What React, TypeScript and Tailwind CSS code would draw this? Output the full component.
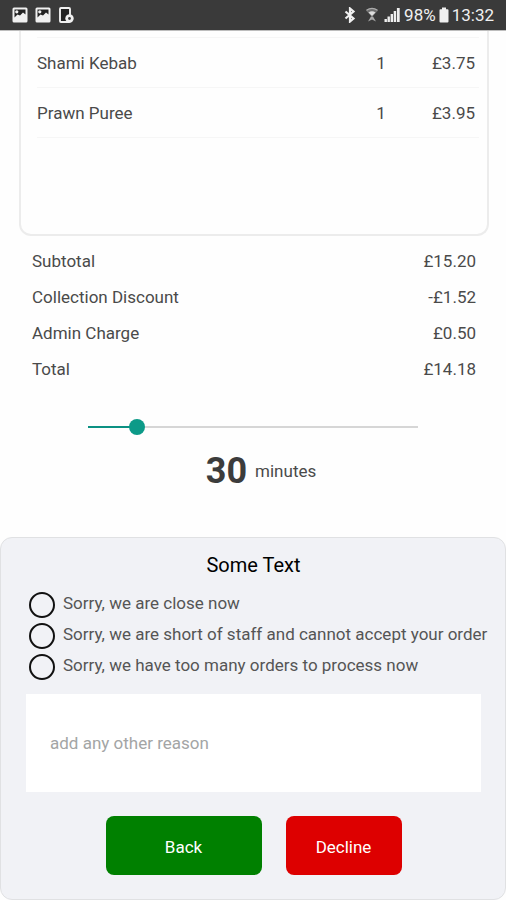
import React, { useState } from 'react';

const items = [
  { name: 'Shami Kebab', qty: 1, price: '£3.75' },
  { name: 'Prawn Puree', qty: 1, price: '£3.95' },
];

const totals = [
  { label: 'Subtotal', value: '£15.20' },
  { label: 'Collection Discount', value: '-£1.52' },
  { label: 'Admin Charge', value: '£0.50' },
  { label: 'Total', value: '£14.18' },
];

const reasons = [
  'Sorry, we are close now',
  'Sorry, we are short of staff and cannot accept your order',
  'Sorry, we have too many orders to process now',
];

const MIN_TIME = 15;
const MAX_TIME = 130;

const PictureIcon = () => (
  <svg viewBox="0 0 16 16" className="h-4 w-4" aria-hidden="true">
    <rect x="0.5" y="0.5" width="15" height="15" rx="1.5" fill="#f0f0f0" />
    <path d="M2.500 2.500h11v5L11 5.500 8 8.500 5.500 7.500l-3 3z" fill="#222" />
    <circle cx="4.800" cy="4.800" r="1.600" fill="#f0f0f0" />
  </svg>
);

const DeviceIcon = () => (
  <svg viewBox="0 0 16 16" className="h-4 w-4" aria-hidden="true">
    <rect x="2" y="1" width="10" height="14" rx="1" fill="#222" stroke="#f0f0f0" strokeWidth="1.900" />
    <circle cx="11.500" cy="11.500" r="4.200" fill="#f0f0f0" />
    <circle cx="11.500" cy="11.500" r="1.400" fill="#3a3a3a" />
  </svg>
);

const BluetoothIcon = () => (
  <svg viewBox="0 0 12 16" className="h-4 w-3" fill="none" stroke="#f0f0f0" strokeWidth="2.200" aria-hidden="true">
    <path d="M1.500 4.500l8 7L6 14.500v-13l3.500 3-8 7" />
  </svg>
);

const WifiIcon = () => (
  <svg viewBox="0 0 16 16" className="h-4 w-4" aria-hidden="true">
    <path d="M2 3.500C5.500 0.500 10.500 0.500 14 3.500L8 10z" fill="#6e6e6e" />
    <path d="M2.500 3.200c3.500-2.400 7.500-2.400 11 0" fill="none" stroke="#aaa" strokeWidth="1.300" />
    <path d="M4.500 5.500c2.300-1.600 4.700-1.600 7 0L8 9z" fill="#ddd" />
    <path d="M4 14.500l3-5h2l3 5-4-2z" fill="#a8a8a8" />
  </svg>
);

const SignalIcon = () => (
  <svg viewBox="0 0 16 16" className="h-4 w-4" fill="#f0f0f0" aria-hidden="true">
    <rect x="0.500" y="12" width="2.400" height="3" />
    <rect x="3.500" y="9.500" width="2.400" height="5.500" />
    <rect x="6.600" y="7" width="2.400" height="8" />
    <rect x="9.700" y="4" width="2.400" height="11" />
    <rect x="12.900" y="1" width="2.800" height="14" />
  </svg>
);

const BatteryIcon = () => (
  <svg viewBox="0 0 10 16" className="h-4 w-2.5" fill="#f0f0f0" aria-hidden="true">
    <path d="M3 0.500h4v1.700h1.500q1 0 1 1v11.300q0 1-1 1h-7q-1 0-1-1V3.200q0-1 1-1H3z" />
  </svg>
);

const StatusBar = () => (
  <header className="flex h-[31px] items-center justify-between border-b border-[#bdbdbd] bg-[#3a3a3a] px-3 text-[17px] leading-5 text-[#f0f0f0]">
    <div className="flex items-center gap-[7px]">
      <PictureIcon />
      <PictureIcon />
      <DeviceIcon />
    </div>
    <div className="flex items-center gap-1">
      <div className="flex items-center gap-2">
        <BluetoothIcon />
        <WifiIcon />
      </div>
      <SignalIcon />
      <div className="flex items-center gap-[3px]">
        <span>98%</span>
        <BatteryIcon />
        <span>13:32</span>
      </div>
    </div>
  </header>
);

const DeclinePanel = () => {
  const [reason, setReason] = useState('');

  return (
    <form
      className="mt-[46px] rounded-xl border border-[#e0e1e3] bg-[#f1f2f6] pb-6 pl-[25px] pr-6 pt-[15px]"
      onSubmit={(e) => e.preventDefault()}
    >
      <h2 className="text-center text-xl leading-6 text-black">Some Text</h2>

      <fieldset className="mt-[15px] flex flex-col gap-[5px] pl-[3px]">
        {reasons.map((text) => (
          <label key={text} className="flex h-[26px] items-center gap-2 whitespace-nowrap text-[#555]">
            <input
              type="radio"
              name="reason"
              value={text}
              checked={reason === text}
              onChange={() => setReason(text)}
              className="h-[26px] w-[26px] shrink-0 appearance-none rounded-full border-2 border-[#111] checked:border-8"
            />
            <span className="pb-1">{text}</span>
          </label>
        ))}
      </fieldset>

      <input
        type="text"
        aria-label="Other reason"
        placeholder="add any other reason"
        className="mt-[14px] h-[98px] w-full bg-white px-6 text-[#444] outline-none placeholder:text-[#a3a5a5]"
      />

      <div className="mt-6 flex justify-center gap-6">
        <button type="button" className="h-[59px] w-[156px] rounded-lg bg-[#008000] pt-0.5 text-white">
          Back
        </button>
        <button type="submit" className="h-[59px] w-[116px] rounded-lg bg-[#dd0000] pt-0.5 text-white">
          Decline
        </button>
      </div>
    </form>
  );
};

export default function App() {
  const [minutes, setMinutes] = useState(30);
  const filled = ((minutes - MIN_TIME) / (MAX_TIME - MIN_TIME)) * 100;

  return (
    <div className="min-h-screen bg-[#fefefe] font-['Roboto',sans-serif] text-[17px] leading-6 text-[#4a4a4a]">
      <StatusBar />

      <main>
        {/* Order items */}
        <section className="ml-[19px] mr-[17px] h-[205px] rounded-b-xl border-x-2 border-b-2 border-[#ececec] pl-4 pr-2 pt-1.5">
          <table className="w-full border-t border-[#f6f6f6]">
            <tbody>
              {items.map((item) => (
                <tr key={item.name} className="h-[50px] border-b border-[#f6f6f6]">
                  <td>{item.name}</td>
                  <td className="w-12 pr-1 text-center">{item.qty}</td>
                  <td className="w-18 pr-1 text-right">{item.price}</td>
                </tr>
              ))}
            </tbody>
          </table>
        </section>

        <dl className="mt-[13px] flex flex-col gap-3 pl-8 pr-[30px]">
          {totals.map((row) => (
            <div key={row.label} className="flex justify-between">
              <dt>{row.label}</dt>
              <dd>{row.value}</dd>
            </div>
          ))}
        </dl>

        {/* Preparation time */}
        <section className="mt-[38px] px-[88px]">
          <input
            type="range"
            aria-label="Minutes"
            min={MIN_TIME}
            max={MAX_TIME}
            step={5}
            value={minutes}
            onChange={(e) => setMinutes(Number(e.target.value))}
            style={{ '--filled': `${filled}%` } as React.CSSProperties}
            className="block h-4 w-full appearance-none bg-transparent [&::-webkit-slider-runnable-track]:h-0.5 [&::-webkit-slider-runnable-track]:bg-[linear-gradient(to_right,#0c9183_var(--filled),#d6d6d6_var(--filled))] [&::-webkit-slider-thumb]:-mt-[7px] [&::-webkit-slider-thumb]:h-4 [&::-webkit-slider-thumb]:w-4 [&::-webkit-slider-thumb]:appearance-none [&::-webkit-slider-thumb]:rounded-full [&::-webkit-slider-thumb]:bg-[#0c9a88]"
          />
          <p className="mt-4 flex items-center justify-center gap-2 pl-4">
            <strong className="text-4xl font-bold leading-10 text-[#3c3c3c]">{minutes}</strong>
            <span>minutes</span>
          </p>
        </section>

        <DeclinePanel />
      </main>
    </div>
  );
}
